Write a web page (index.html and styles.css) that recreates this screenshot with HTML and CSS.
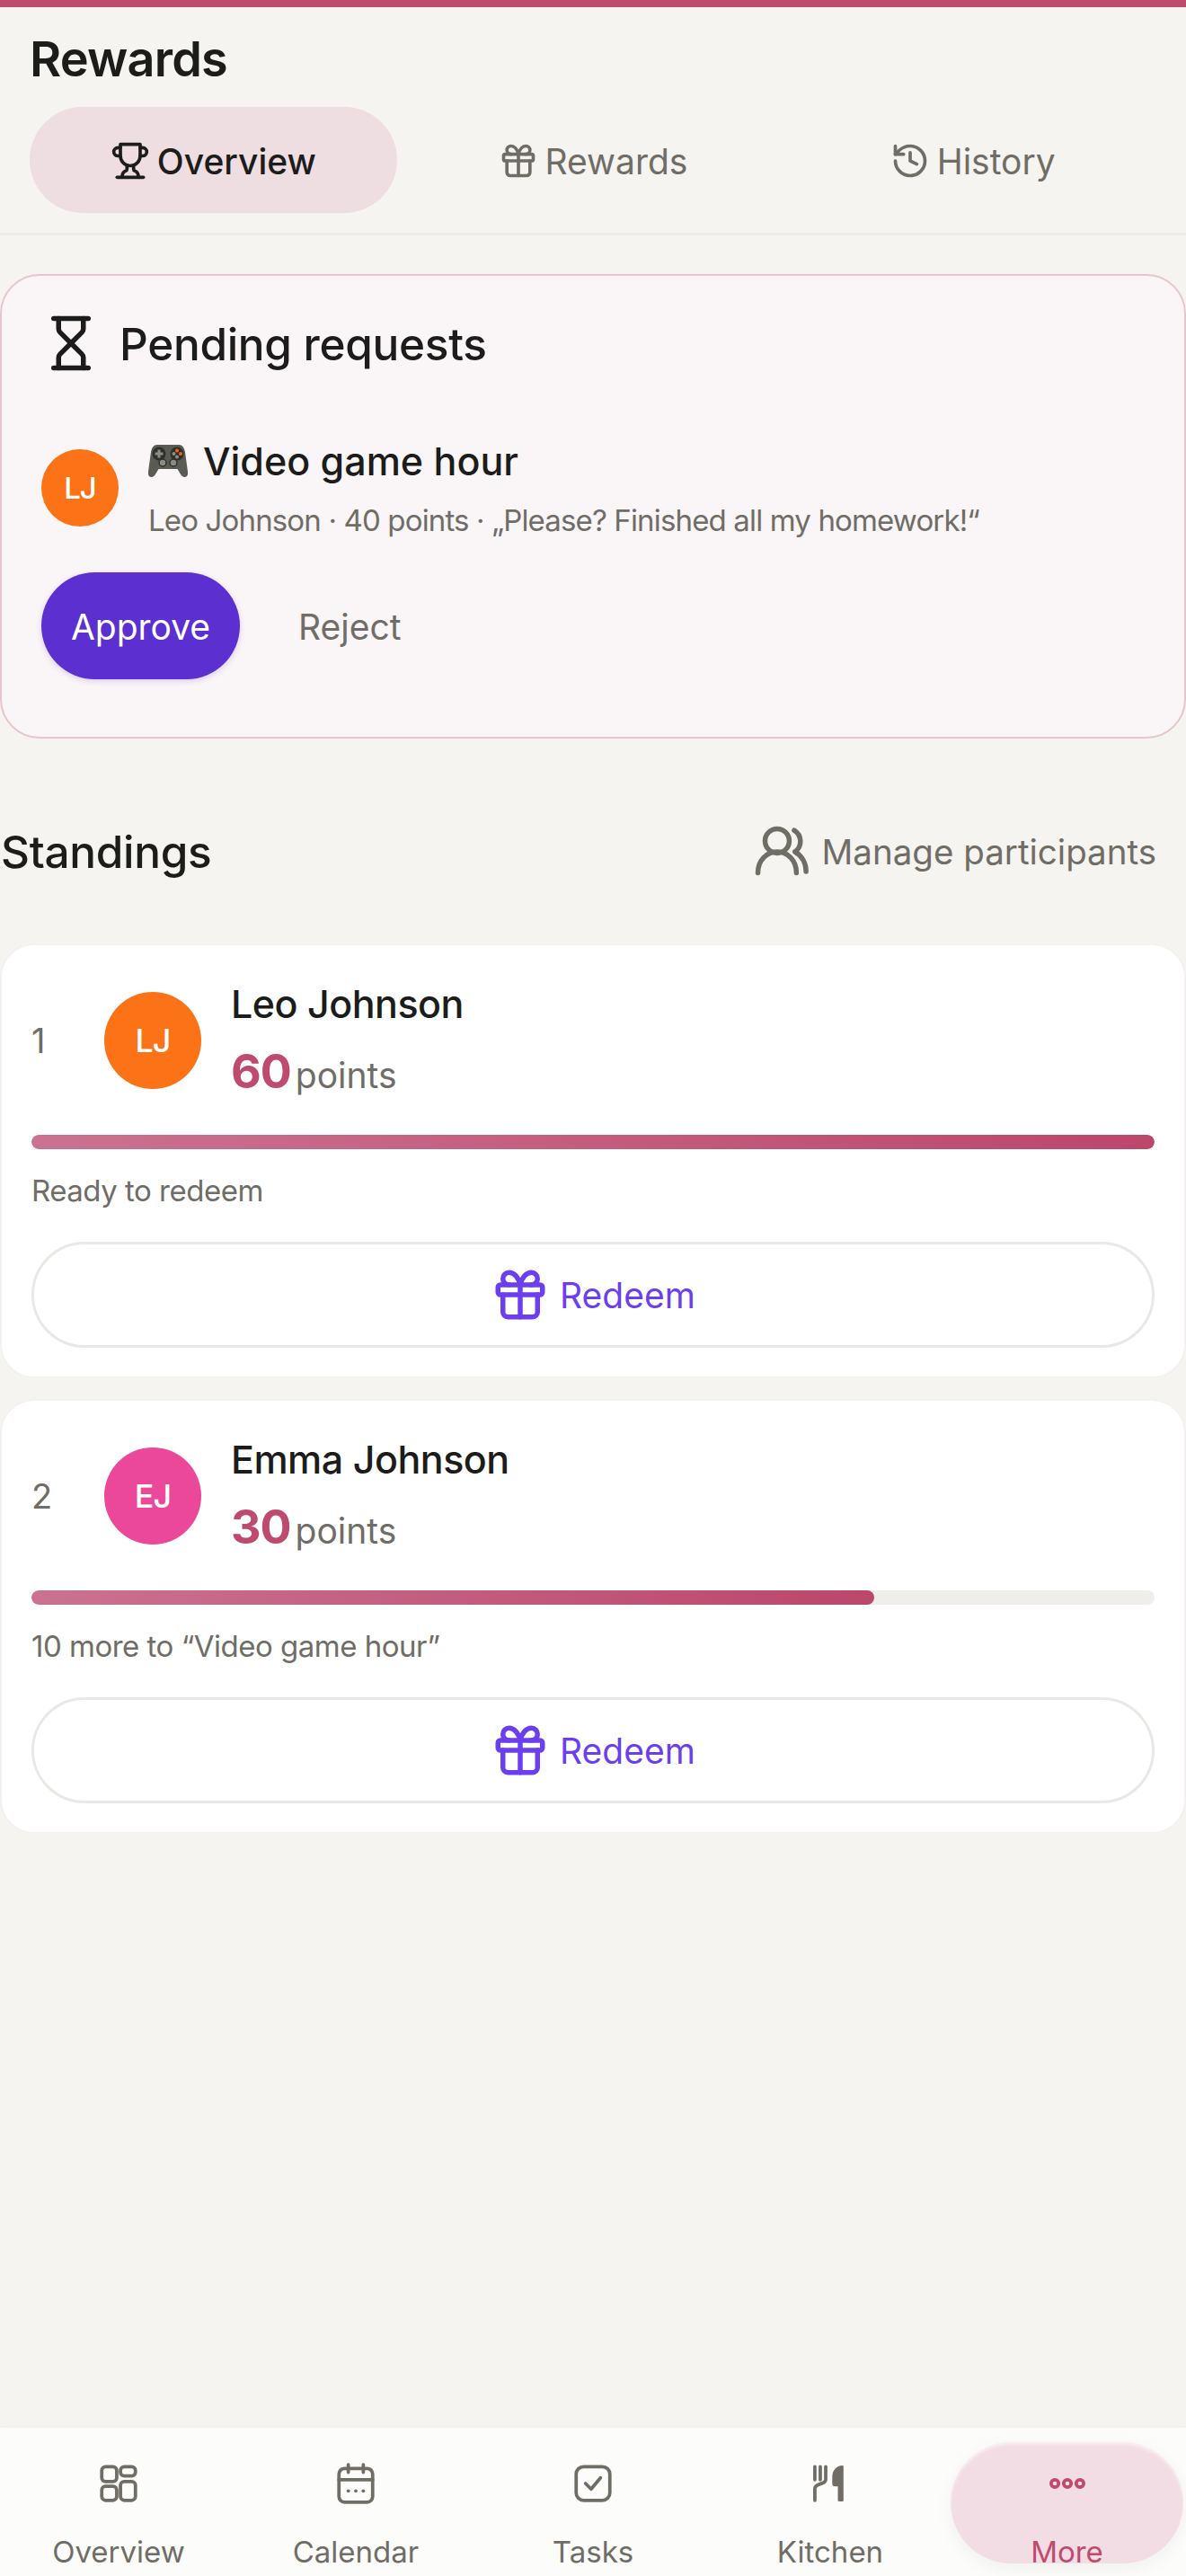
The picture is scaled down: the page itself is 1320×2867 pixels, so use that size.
FILE: index.html
```html
<!DOCTYPE html>
<html lang="en">
<head>
    <meta charset="UTF-8">
    <meta name="viewport" content="width=device-width, initial-scale=1.0">
    <title>Rewards</title>
    <link rel="stylesheet" href="styles.css">
</head>
<body>
    <div class="top-bar"></div>

    <header class="page-header">
        <h1>Rewards</h1>
        <div class="tabs">
            <div class="tab active">
                <svg class="icon-sm" viewBox="0 0 24 24"><path d="M6 9H4.500a2.500 2.500 0 0 1 0-5H6"/><path d="M18 9h1.500a2.500 2.500 0 0 0 0-5H18"/><path d="M4 22h16"/><path d="M10 14.660V17c0 .55-.47.98-.97 1.210C7.850 18.750 7 20.240 7 22"/><path d="M14 14.660V17c0 .55.47.98.97 1.210C16.150 18.750 17 20.240 17 22"/><path d="M18 2H6v7a6 6 0 0 0 12 0V2Z"/></svg>
                <span>Overview</span>
            </div>
            <div class="tab">
                <svg class="icon-sm" viewBox="0 0 24 24"><rect x="3" y="8" width="18" height="4" rx="1"/><path d="M12 8v13"/><path d="M19 12v7a2 2 0 0 1-2 2H7a2 2 0 0 1-2-2v-7"/><path d="M7.500 8a2.500 2.500 0 0 1 0-5A4.800 8 0 0 1 12 8a4.800 8 0 0 1 4.500-5 2.500 2.500 0 0 1 0 5"/></svg>
                <span>Rewards</span>
            </div>
            <div class="tab">
                <svg class="icon-sm" viewBox="0 0 24 24"><path d="M3 12a9 9 0 1 0 9-9 9.750 9.750 0 0 0-6.740 2.740L3 8"/><path d="M3 3v5h5"/><path d="M12 7v5l4 2"/></svg>
                <span>History</span>
            </div>
        </div>
    </header>

    <main class="content">
        <section class="pending-card">
            <div class="pending-title">
                <svg class="icon-lg" viewBox="0 0 24 24"><path d="M5 22h14"/><path d="M5 2h14"/><path d="M17 22v-4.172a2 2 0 0 0-.586-1.414L12 12l-4.414 4.414A2 2 0 0 0 7 17.828V22"/><path d="M7 2v4.172a2 2 0 0 0 .586 1.414L12 12l4.414-4.414A2 2 0 0 0 17 6.172V2"/></svg>
                <h2>Pending requests</h2>
            </div>
            <div class="request-row">
                <div class="avatar avatar-small orange">LJ</div>
                <div>
                    <div class="request-name">
                        <svg class="gamepad" viewBox="0 0 44 38">
                            <path class="pad-body" d="M10 1h24c4 0 6 3 7 8l3 22c.4 4-1 6-3.500 6-2 0-3.500-1.500-5-4l-3-5H11.500l-3 5c-1.500 2.500-3 4-5 4C1 37-.4 35 0 31L3 9c1-5 3-8 7-8z"/>
                            <circle class="pad-dark" cx="12" cy="11" r="7.500"/>
                            <circle class="pad-dark" cx="32" cy="11" r="7.500"/>
                            <path class="pad-cross" d="M10.500 6.500h3v3h3v3h-3v3h-3v-3h-3v-3h3z"/>
                            <circle class="pad-grey" cx="32" cy="14.500" r="2"/>
                            <circle class="pad-orange" cx="36" cy="11" r="2"/>
                            <circle class="pad-grey" cx="28.500" cy="11" r="2"/>
                            <circle class="pad-orange" cx="32" cy="7.500" r="2"/>
                            <circle class="pad-stick" cx="16" cy="21" r="4"/>
                            <circle class="pad-stick" cx="28" cy="21" r="4"/>
                        </svg>
                        <span>Video game hour</span>
                    </div>
                    <div class="request-meta">Leo Johnson · 40 points · „Please? Finished all my homework!“</div>
                </div>
            </div>
            <div class="request-actions">
                <button class="btn-approve">Approve</button>
                <button class="btn-reject">Reject</button>
            </div>
        </section>

        <div class="standings-head">
            <h2>Standings</h2>
            <div class="manage-link">
                <svg class="icon-lg" viewBox="0 0 24 24"><circle cx="9.800" cy="7.600" r="4.900"/><path d="M2 20.500c0-5 3.500-8.500 7.800-8.500s7.800 3.500 7.800 8.500"/><path d="M16.700 3.300a5.200 5.200 0 0 1 .3 8.700c2.800 1.600 4.500 4.600 4.500 8"/></svg>
                <span>Manage participants</span>
            </div>
        </div>

        <div class="standings">
            <article class="person-card">
                <div class="person-head">
                    <div class="rank">1</div>
                    <div class="avatar orange">LJ</div>
                    <div>
                        <div class="person-name">Leo Johnson</div>
                        <div class="person-points"><strong>60</strong> points</div>
                    </div>
                </div>
                <div class="progress"><div class="progress-fill" style="width: 100%"></div></div>
                <div class="progress-note">Ready to redeem</div>
                <button class="btn-redeem">
                    <svg class="icon-lg" viewBox="0 0 24 24"><rect x="3" y="8" width="18" height="4" rx="1"/><path d="M12 8v13"/><path d="M19 12v7a2 2 0 0 1-2 2H7a2 2 0 0 1-2-2v-7"/><path d="M7.500 8a2.500 2.500 0 0 1 0-5A4.800 8 0 0 1 12 8a4.800 8 0 0 1 4.500-5 2.500 2.500 0 0 1 0 5"/></svg>
                    <span>Redeem</span>
                </button>
            </article>

            <article class="person-card">
                <div class="person-head">
                    <div class="rank">2</div>
                    <div class="avatar pink">EJ</div>
                    <div>
                        <div class="person-name">Emma Johnson</div>
                        <div class="person-points"><strong>30</strong> points</div>
                    </div>
                </div>
                <div class="progress"><div class="progress-fill" style="width: 75%"></div></div>
                <div class="progress-note">10 more to “Video game hour”</div>
                <button class="btn-redeem">
                    <svg class="icon-lg" viewBox="0 0 24 24"><rect x="3" y="8" width="18" height="4" rx="1"/><path d="M12 8v13"/><path d="M19 12v7a2 2 0 0 1-2 2H7a2 2 0 0 1-2-2v-7"/><path d="M7.500 8a2.500 2.500 0 0 1 0-5A4.800 8 0 0 1 12 8a4.800 8 0 0 1 4.500-5 2.500 2.500 0 0 1 0 5"/></svg>
                    <span>Redeem</span>
                </button>
            </article>
        </div>
    </main>

    <nav class="bottom-nav">
        <div class="nav-item">
            <svg class="icon-nav" viewBox="0 0 24 24"><rect x="3" y="3" width="8" height="8" rx="2"/><rect x="3" y="13.500" width="8" height="7.500" rx="2"/><rect x="13" y="3" width="8" height="5" rx="2"/><rect x="13" y="11" width="8" height="10" rx="2"/></svg>
            <span>Overview</span>
        </div>
        <div class="nav-item">
            <svg class="icon-nav" viewBox="0 0 24 24"><path d="M8 2v4"/><path d="M16 2v4"/><rect x="3" y="4" width="18" height="18" rx="3"/><path d="M3 10h18"/><path d="M8 16h.01"/><path d="M12 16h.01"/><path d="M16 16h.01"/></svg>
            <span>Calendar</span>
        </div>
        <div class="nav-item">
            <svg class="icon-nav" viewBox="0 0 24 24"><rect x="3" y="3" width="18" height="18" rx="4"/><path d="m8 12 3 3 5-6"/></svg>
            <span>Tasks</span>
        </div>
        <div class="nav-item">
            <svg class="icon-nav" viewBox="0 0 24 24"><path d="M3.800 3v7M6.700 3v7M9.600 3v7c0 1.200-1 1.600-3 2.300-2 .7-2.800 1.200-2.800 2.400V21"/><path class="knife" d="M18.500 3v18h-1.800v-8h-2c-.6 0-1-.4-1-1V8.500c0-3 2-5.500 4.800-5.500z"/></svg>
            <span>Kitchen</span>
        </div>
        <div class="nav-item active">
            <svg class="icon-nav" viewBox="0 0 24 24"><circle cx="5.300" cy="12" r="2"/><circle cx="12" cy="12" r="2"/><circle cx="18.700" cy="12" r="2"/></svg>
            <span>More</span>
        </div>
    </nav>
</body>
</html>
```

FILE: styles.css
```css
* {
    box-sizing: border-box;
}

body {
    font-family: Inter, "Liberation Sans", sans-serif;
    background-color: #f5f4f0;
    color: #1c1c1a;
    margin: 0;
    min-height: 100vh;
    display: flex;
    flex-direction: column;
}

svg {
    fill: none;
    stroke: currentColor;
    stroke-width: 2;
    stroke-linecap: round;
    stroke-linejoin: round;
    flex-shrink: 0;
}

button {
    font-family: inherit;
    border: none;
    cursor: pointer;
}

.icon-sm {
    width: 44px;
    height: 44px;
}

.icon-lg {
    width: 66px;
    height: 66px;
}

.icon-nav {
    width: 50px;
    height: 50px;
    stroke-width: 1.8;
}

.top-bar {
    height: 8px;
    background-color: #be4a6e;
}

.page-header {
    padding-top: 25px;
    border-bottom: 3px solid #ecebe7;
    height: 254px;
}

.page-header h1 {
    margin: 0 0 20px 33px;
    font-size: 54px;
    line-height: 66px;
    font-weight: 600;
    letter-spacing: -0.8px;
}

.tabs {
    display: grid;
    grid-template-columns: repeat(3, 1fr);
    gap: 14px;
    padding: 0 33px;
}

.tab {
    height: 118px;
    padding-top: 2px;
    border-radius: 59px;
    display: flex;
    align-items: center;
    justify-content: center;
    gap: 8px;
    font-size: 39px;
    color: #6f6d66;
}

.tab.active {
    background-color: #eedde1;
    color: #1c1c1a;
    font-weight: 500;
}

.content {
    flex: 1;
    padding-top: 43px;
}

.pending-card {
    height: 517px;
    padding: 42px 44px 0;
    background-color: #faf5f7;
    border: 2px solid #e8c4ce;
    border-radius: 44px;
}

.pending-title {
    display: flex;
    align-items: center;
    gap: 21px;
}

.pending-title h2,
.standings-head h2 {
    margin: 0;
    font-size: 49.5px;
    font-weight: 500;
    letter-spacing: -0.3px;
}

.pending-title h2 {
    padding-top: 2px;
}

.request-row {
    display: flex;
    align-items: center;
    gap: 33px;
    margin-top: 68px;
}

.avatar {
    width: 108px;
    height: 108px;
    border-radius: 50%;
    color: white;
    font-size: 36px;
    font-weight: 500;
    letter-spacing: -1px;
    display: flex;
    align-items: center;
    justify-content: center;
    flex-shrink: 0;
}

.avatar-small {
    width: 86px;
    height: 86px;
    font-size: 33px;
}

.orange {
    background-color: #fb7316;
}

.pink {
    background-color: #ec4899;
}

.request-name {
    display: flex;
    align-items: center;
    gap: 17px;
    font-size: 43px;
    font-weight: 500;
    line-height: 60px;
}

.gamepad {
    width: 44px;
    height: 38px;
    stroke: none;
}

.pad-body {
    fill: #5a5b53;
}

.pad-dark {
    fill: #2f2f2c;
}

.pad-cross,
.pad-grey {
    fill: #8d8d86;
}

.pad-orange {
    fill: #e8651f;
}

.pad-stick {
    fill: #8a8b84;
    stroke: #2f2f2c;
    stroke-width: 1.5;
}

.request-meta {
    margin-top: 12px;
    font-size: 33px;
    line-height: 48px;
    color: #6f6d66;
    letter-spacing: -0.85px;
}

.request-actions {
    display: flex;
    align-items: center;
    margin-top: 34px;
}

.btn-approve {
    width: 221px;
    height: 119px;
    padding-top: 2px;
    border-radius: 60px;
    background-color: #5b2fd0;
    color: white;
    font-size: 39px;
    box-shadow: 0 2px 6px rgba(91, 47, 208, 0.2);
}

.btn-reject {
    background: none;
    margin-left: 65px;
    padding: 2px 0 0;
    font-size: 39px;
    color: #6f6d66;
}

.standings-head {
    display: flex;
    align-items: center;
    justify-content: space-between;
    margin-top: 93px;
    padding: 0 33px 0 1px;
}

.manage-link {
    display: flex;
    align-items: center;
    gap: 11px;
    font-size: 38.5px;
    color: #6f6d66;
}

.standings {
    display: flex;
    flex-direction: column;
    gap: 23px;
    margin-top: 69px;
}

.person-card {
    height: 484px;
    padding: 33px;
    background-color: white;
    border: 2px solid #f3f2ee;
    border-radius: 38px;
}

.person-head {
    display: flex;
    align-items: center;
    gap: 33px;
}

.rank {
    width: 48px;
    font-size: 38px;
    color: #6f6d66;
}

.person-name {
    font-size: 43px;
    font-weight: 500;
    line-height: 60px;
    letter-spacing: -0.5px;
    padding-top: 2px;
}

.person-points {
    margin-top: 12px;
    font-size: 39px;
    line-height: 68px;
    color: #6f6d66;
    word-spacing: -6px;
}

.person-points strong {
    font-size: 52px;
    font-weight: 700;
    color: #be4a6e;
    letter-spacing: -1px;
}

.progress {
    height: 16px;
    margin-top: 32px;
    border-radius: 8px;
    background-color: #efeeea;
    overflow: hidden;
}

.progress-fill {
    height: 100%;
    border-radius: 8px;
    background: linear-gradient(90deg, #cb7291, #bb476b);
}

.progress-note {
    margin-top: 24px;
    font-size: 33px;
    line-height: 44px;
    color: #6f6d66;
    letter-spacing: -0.5px;
}

.btn-redeem {
    width: 100%;
    height: 118px;
    margin-top: 35px;
    border-radius: 59px;
    border: 3px solid #e9e8e4;
    background-color: white;
    color: #6b3fef;
    font-size: 39px;
    display: flex;
    align-items: center;
    justify-content: center;
    gap: 11px;
}

.bottom-nav {
    height: 165px;
    padding-top: 16px;
    background-color: #fcfcfa;
    box-shadow: 0 -2px 4px rgba(0, 0, 0, 0.02);
    display: grid;
    grid-template-columns: repeat(5, 1fr);
}

.nav-item {
    height: 135px;
    padding-top: 21px;
    display: flex;
    flex-direction: column;
    align-items: center;
    gap: 31px;
    font-size: 33px;
    line-height: 40px;
    color: #6f6d66;
}

.knife {
    fill: currentColor;
    stroke-width: 1.2;
}

.nav-item.active {
    margin: 0 3px 0 2px;
    border-radius: 68px;
    background-color: #f3dde5;
    color: #be4a6e;
    box-shadow: inset 0 3px 3px rgba(255, 255, 255, 0.5), 0 6px 20px rgba(0, 0, 0, 0.05);
}
```
